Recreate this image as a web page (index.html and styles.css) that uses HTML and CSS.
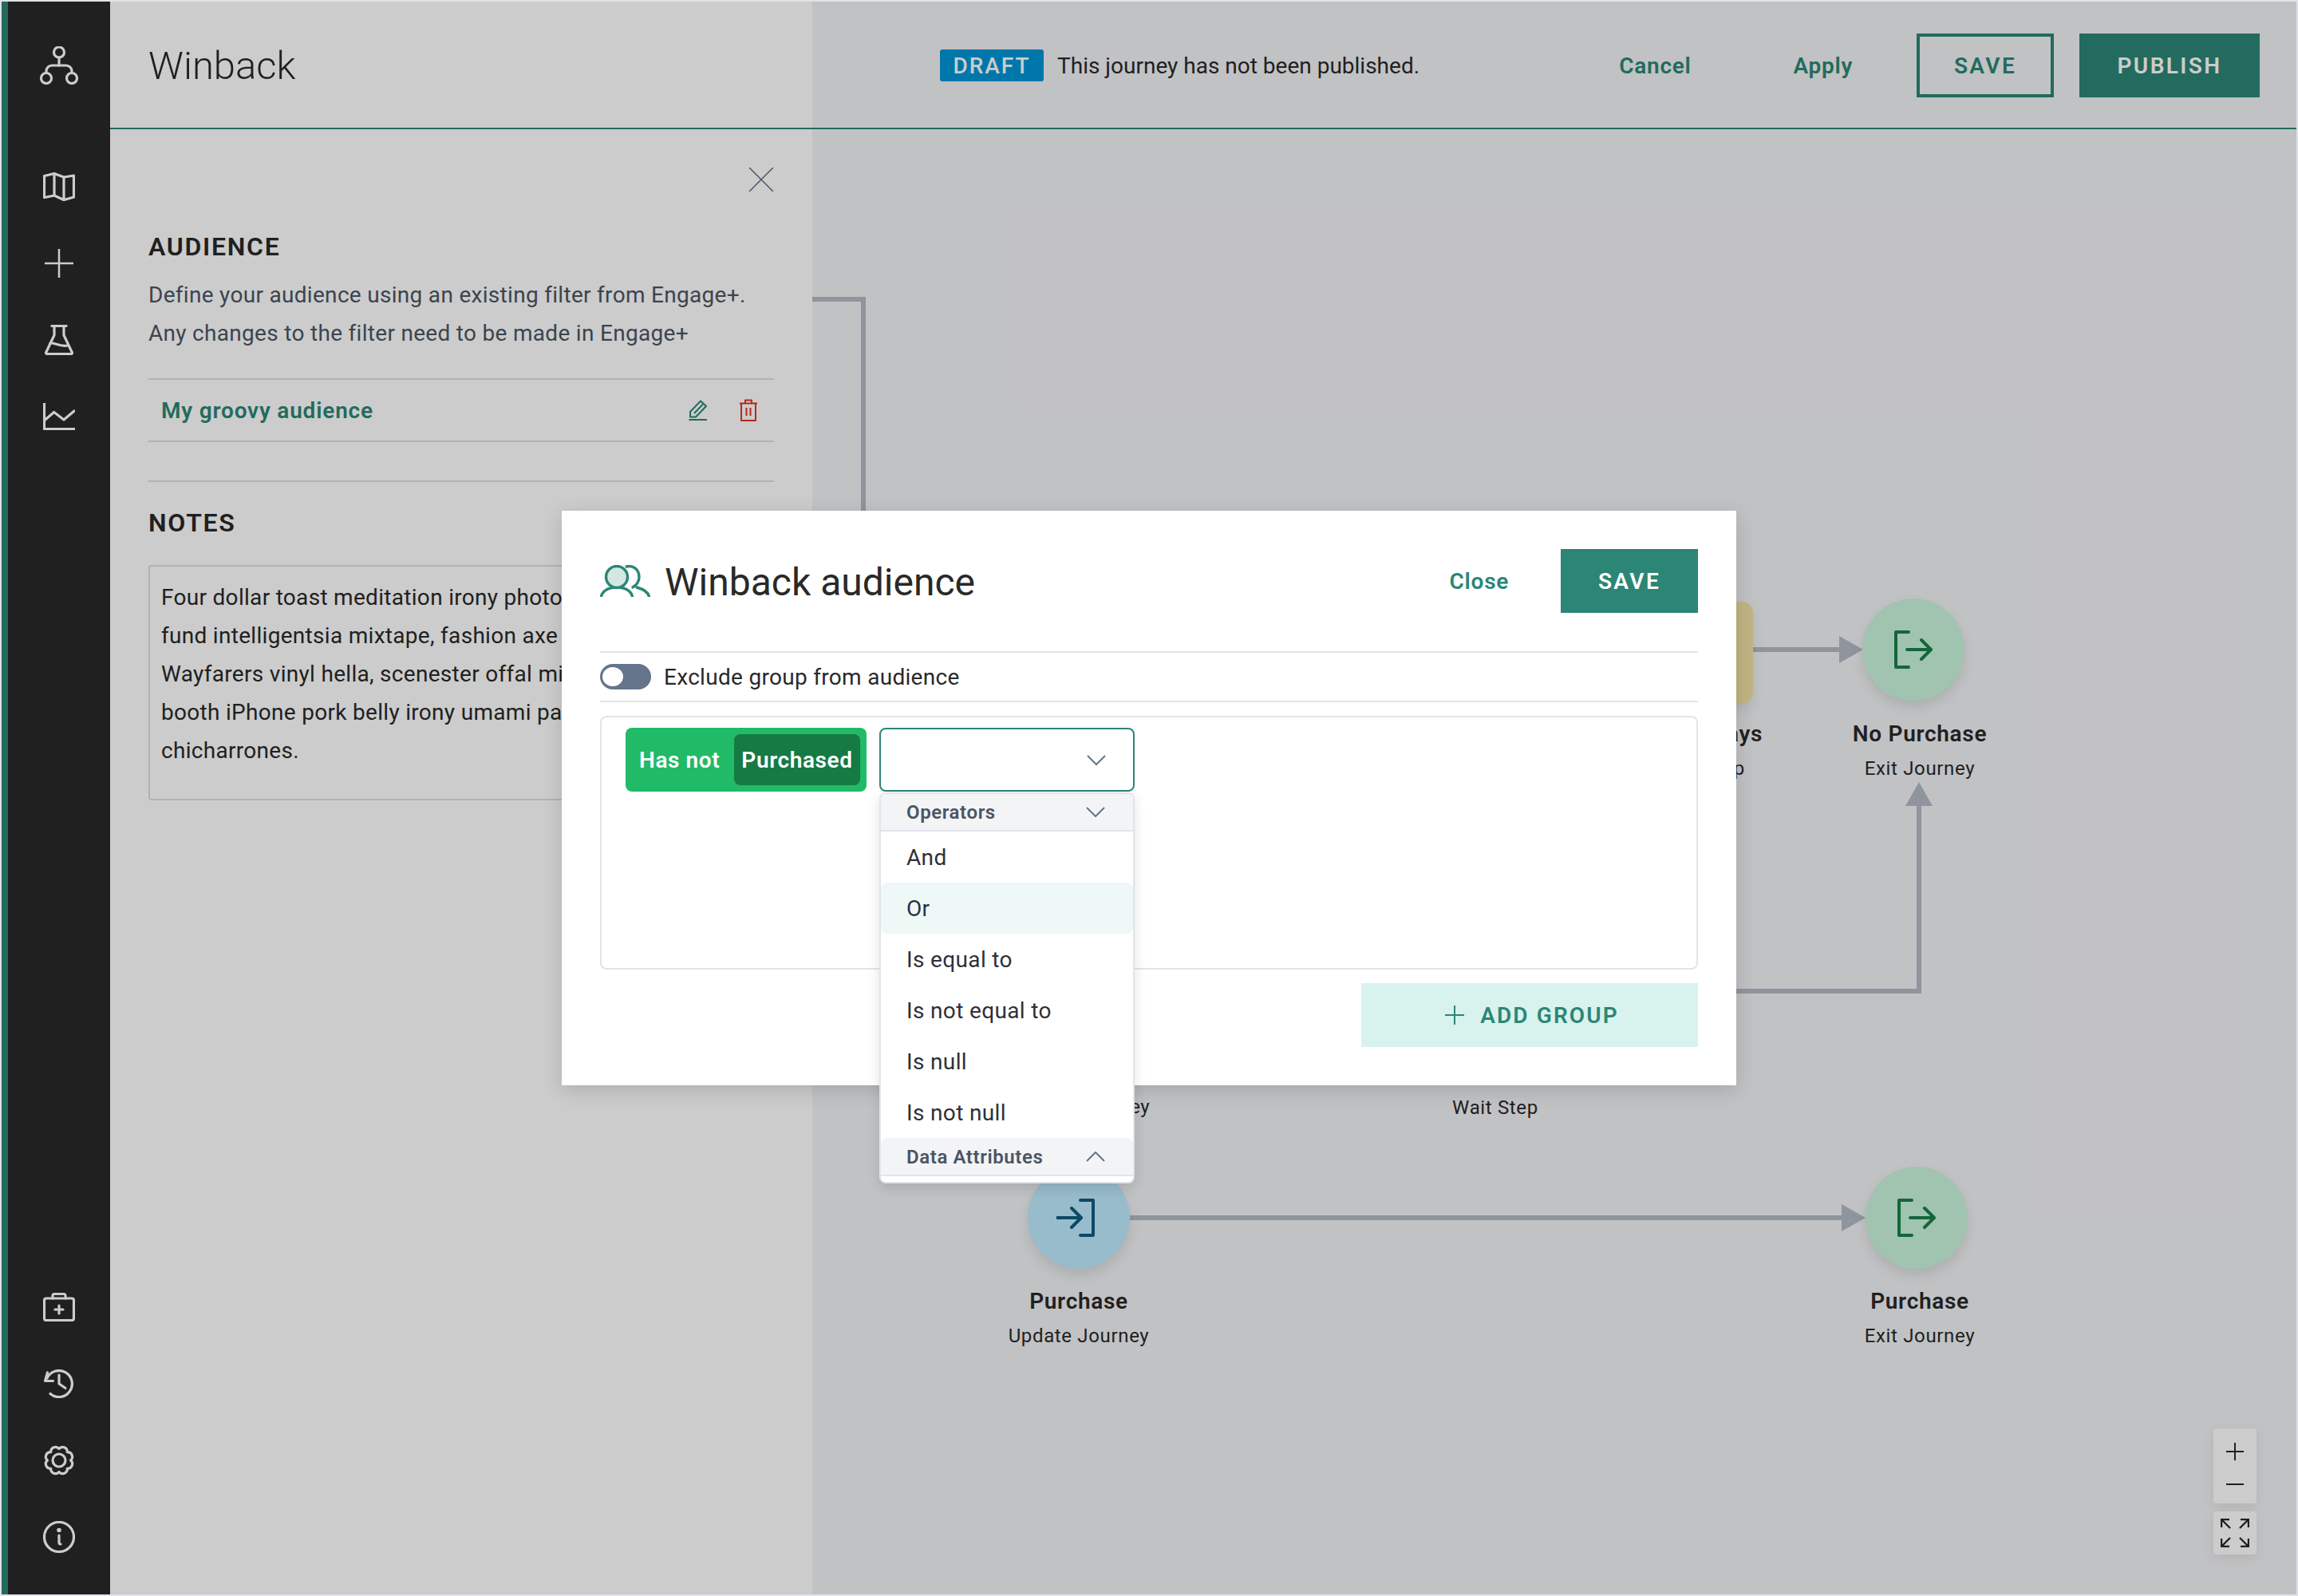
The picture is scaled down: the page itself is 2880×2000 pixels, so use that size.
FILE: index.html
```html
<!DOCTYPE html>
<html lang="en">
<head>
  <meta charset="UTF-8">
  <title>Winback</title>
  <link rel="stylesheet" href="styles.css">
</head>
<body>
<div class="app">

  <aside class="sidebar">
    <div class="logo-cell">
      <svg class="ico" width="48" height="48" viewBox="0 0 48 48"><circle cx="24" cy="7.5" r="6.5"/><path d="M24 14V24"/><path d="M8 33.5V31a7 7 0 0 1 7-7H33a7 7 0 0 1 7 7v2.5"/><circle cx="8" cy="40" r="6.5"/><circle cx="40" cy="40" r="6.5"/></svg>
    </div>
    <nav class="nav-group">
      <a class="nav-item"><svg class="ico" width="40" height="36" viewBox="0 0 40 36"><path d="M1.5 4.5L14 1.5L26 6L38.5 4V31L26 34.5L14 29L1.5 31.5Z"/><path d="M14 1.5V29M26 6V34.5"/></svg></a>
      <a class="nav-item"><svg class="ico thin" width="36" height="36" viewBox="0 0 36 36"><path d="M18 0V36M0 18H36"/></svg></a>
      <a class="nav-item"><svg class="ico" width="36" height="38" viewBox="0 0 36 38"><path d="M9 1.5H27M12 2V13L2 34a1.5 1.5 0 0 0 1.5 2.5H32.5A1.5 1.5 0 0 0 34 34L24 13V2"/><path d="M7 23C13 22 18 28 29 26"/></svg></a>
      <a class="nav-item"><svg class="ico" width="40" height="34" viewBox="0 0 40 34"><path d="M1.5 0V32.5H39.5"/><path d="M1.5 22L13.7 11.5L26 21L39 10"/></svg></a>
    </nav>
    <nav class="nav-group nav-bottom">
      <a class="nav-item"><svg class="ico" width="40" height="36" viewBox="0 0 40 36"><rect x="1.5" y="7" width="37" height="27.5" rx="2.5"/><path d="M12 7V4a2.5 2.5 0 0 1 2.5-2.5H25.5A2.5 2.5 0 0 1 28 4V7"/><path d="M20 16V26M15 21H25"/></svg></a>
      <a class="nav-item"><svg class="ico" width="38" height="36" viewBox="0 0 38 36"><path d="M4 11A16.5 16.5 0 1 1 8 30.5"/><path d="M4.5 4L1.5 14.5H11.5"/><path d="M19 7V18L27 23.5"/></svg></a>
      <a class="nav-item"><svg class="ico" width="40" height="40" viewBox="0 0 40 40"><path d="M20 5.5A5.8 5.8 0 0 1 30.25 9.75A5.8 5.8 0 0 1 34.5 20A5.8 5.8 0 0 1 30.25 30.25A5.8 5.8 0 0 1 20 34.5A5.8 5.8 0 0 1 9.75 30.25A5.8 5.8 0 0 1 5.5 20A5.8 5.8 0 0 1 9.75 9.75A5.8 5.8 0 0 1 20 5.5Z"/><circle cx="20" cy="20" r="8"/></svg></a>
      <a class="nav-item"><svg class="ico" width="40" height="40" viewBox="0 0 40 40"><circle cx="20" cy="20" r="18.5"/><circle class="dot" cx="20" cy="11.5" r="1.2"/><path d="M20 18V27a2 2 0 0 0 2 2"/></svg></a>
    </nav>
  </aside>

  <div class="main">
    <header class="topbar">
      <div class="topbar-title"><h1>Winback</h1></div>
      <div class="topbar-rest">
        <span class="draft-badge">DRAFT</span>
        <span class="draft-msg">This journey has not been published.</span>
        <div class="actions">
          <button class="btn-link">Cancel</button>
          <button class="btn-link">Apply</button>
          <button class="btn btn-outline">SAVE</button>
          <button class="btn btn-solid btn-publish">PUBLISH</button>
        </div>
      </div>
    </header>

    <div class="workspace">
      <section class="panel">
        <div class="panel-close">
          <svg class="close-x" width="32" height="30" viewBox="0 0 32 30"><path d="M1 0L31 30M31 0L1 30"/></svg>
        </div>
        <h2 class="panel-heading audience-heading">AUDIENCE</h2>
        <p class="panel-desc">Define your audience using an existing filter from Engage+.<br>Any changes to the filter need to be made in Engage+</p>
        <div class="audience-row">
          <span class="audience-name">My groovy audience</span>
          <svg class="edit-ico" width="26" height="26" viewBox="0 0 26 26"><path d="M3 21.5V15L16 1.5L23 8L10 21.5Z"/><path d="M8 17L19 5.5"/><path d="M1.5 25H24"/></svg>
          <svg class="trash-ico" width="24" height="28" viewBox="0 0 24 28"><path d="M1 5.5H23M8 5V1.5H16V5"/><path d="M3 5.5V27H21V5.5"/><path d="M9.5 11V21M14.5 11V21"/></svg>
        </div>
        <hr class="panel-rule">
        <h2 class="panel-heading notes-heading">NOTES</h2>
        <div class="notes-box">Four dollar toast meditation irony photo booth, next level<br>fund intelligentsia mixtape, fashion axe kickstarter tofu<br>Wayfarers vinyl hella, scenester offal mixtape chia<br>booth iPhone pork belly irony umami paleo tacos<br>chicharrones.</div>
      </section>

      <section class="canvas">
        <svg class="wires" width="1860" height="1836" viewBox="1018 162 1860 1836">
          <path d="M1018 375H1082V700"/>
          <path d="M2196 814H2306"/>
          <path class="head" d="M2305 797L2335 814L2305 831Z"/>
          <path d="M2100 1242H2405V1005"/>
          <path class="head" d="M2388 1010L2405 980L2422 1010Z"/>
          <path d="M1416 1526H2310"/>
          <path class="head" d="M2308 1509L2338 1526L2308 1543Z"/>
        </svg>

        <div class="wait-box"></div>

        <div class="node node-exit-a">
          <div class="node-dot dot-green shift-a">
            <svg class="exit-ico" width="48" height="48" viewBox="0 0 48 48"><path d="M18 2H2V46H18"/><path d="M16 24H46M34 12L46 24L34 36"/></svg>
          </div>
          <div class="node-title">No Purchase</div>
          <div class="node-sub">Exit Journey</div>
        </div>
        <div class="node node-wait">
          <div class="node-spacer"></div>
          <div class="node-title">Wait 7 days</div>
          <div class="node-sub">Wait Step</div>
        </div>
        <div class="node node-wait-low">
          <div class="node-spacer"></div>
          <div class="node-title">Wait 7 days</div>
          <div class="node-sub">Wait Step</div>
        </div>
        <div class="node node-update-mid">
          <div class="node-spacer"></div>
          <div class="node-title">Purchase</div>
          <div class="node-sub">Update Journey</div>
        </div>
        <div class="node node-update">
          <div class="node-dot dot-blue">
            <svg class="enter-ico" width="48" height="48" viewBox="0 0 48 48"><path d="M30 2H46V46H30"/><path d="M0 24H30M19 12L31 24L19 36"/></svg>
          </div>
          <div class="node-title">Purchase</div>
          <div class="node-sub">Update Journey</div>
        </div>
        <div class="node node-exit-b">
          <div class="node-dot dot-green shift-b">
            <svg class="exit-ico" width="48" height="48" viewBox="0 0 48 48"><path d="M18 2H2V46H18"/><path d="M16 24H46M34 12L46 24L34 36"/></svg>
          </div>
          <div class="node-title">Purchase</div>
          <div class="node-sub">Exit Journey</div>
        </div>

        <div class="zoom-controls">
          <div class="zoom-box zoom-pm">
            <svg class="zoom-ico" width="22" height="22" viewBox="0 0 22 22"><path d="M11 0V22M0 11H22"/></svg>
            <svg class="zoom-ico" width="22" height="2" viewBox="0 0 22 2"><path d="M0 1H22"/></svg>
          </div>
          <div class="zoom-box zoom-fit">
            <svg class="fit-ico" width="36" height="36" viewBox="0 0 36 36"><path d="M1 11V1H11M1 1L12 12M25 1H35V11M35 1L24 12M1 25V35H11M1 35L12 24M25 35H35V25M35 35L24 24"/></svg>
          </div>
        </div>
      </section>
    </div>
  </div>

  <div class="overlay">
    <div class="modal">
      <div class="modal-head">
        <svg class="people-ico" width="63" height="40" viewBox="0 0 63 40"><path d="M1.5 39.5C3 32 11 28 21 28C31 28 39 32 40.5 39.5"/><ellipse class="head-fill" cx="21" cy="15" rx="13.5" ry="13.5"/><path d="M33 2C42 0 49 6 49 15C49 21 46 25 41 28"/><path d="M46 28C53 30 60 33 61.5 39.5"/></svg>
        <h2 class="modal-title">Winback audience</h2>
        <button class="btn-link btn-close">Close</button>
        <button class="btn btn-modal-save">SAVE</button>
      </div>
      <div class="exclude-row">
        <span class="toggle"><span class="toggle-knob"></span></span>
        <span>Exclude group from audience</span>
      </div>
      <div class="group-box">
        <div class="rule-pill">
          <span class="rule-label">Has not</span>
          <span class="rule-value">Purchased</span>
        </div>
        <div class="select-wrap">
          <div class="select-input">
            <svg class="chev" width="24" height="13" viewBox="0 0 24 13"><path d="M1 1L12 12L23 1"/></svg>
          </div>
          <div class="select-menu">
            <div class="menu-head">
              <span>Operators</span>
              <svg class="chev" width="24" height="13" viewBox="0 0 24 13"><path d="M1 1L12 12L23 1"/></svg>
            </div>
            <div class="menu-item">And</div>
            <div class="menu-item menu-item-hover">Or</div>
            <div class="menu-item">Is equal to</div>
            <div class="menu-item">Is not equal to</div>
            <div class="menu-item">Is null</div>
            <div class="menu-item">Is not null</div>
            <div class="menu-head menu-head-data">
              <span>Data Attributes</span>
              <svg class="chev" width="24" height="13" viewBox="0 0 24 13"><path d="M1 12L12 1L23 12"/></svg>
            </div>
          </div>
        </div>
      </div>
      <div class="modal-foot">
        <button class="btn-add">
          <svg class="add-ico" width="24" height="24" viewBox="0 0 24 24"><path d="M12 0V24M0 12H24"/></svg>
          ADD GROUP
        </button>
      </div>
    </div>
  </div>

</div>
</body>
</html>
```

FILE: styles.css
```css
* { box-sizing: border-box; }
html, body { margin: 0; height: 100%; }
body { padding: 2px; background-color: #dfe2e8; font-family: Roboto, "Liberation Sans", sans-serif; color: #292929; }
button { font-family: inherit; cursor: pointer; border: none; background: none; padding: 0; }
h1, h2, p { margin: 0; }

.app { position: relative; display: flex; width: 2876px; height: 1996px; overflow: hidden; }

/* sidebar */
.sidebar { display: flex; flex-direction: column; width: 136px; flex-shrink: 0; background-color: #292929; border-left: 8px solid #2b8676; padding-bottom: 24px; }
.logo-cell { display: flex; align-items: center; justify-content: center; height: 160px; flex-shrink: 0; margin-bottom: 24px; }
.nav-group { display: flex; flex-direction: column; }
.nav-bottom { margin-top: auto; }
.nav-item { display: flex; align-items: center; justify-content: center; height: 96px; }
.ico { fill: none; stroke: #fff; stroke-width: 3.2; stroke-linecap: round; stroke-linejoin: round; }
.ico.thin { stroke-width: 2.5; }
.ico .dot { fill: #fff; }

/* top bar */
.main { display: flex; flex-direction: column; flex: 1; min-width: 0; }
.topbar { display: flex; height: 160px; flex-shrink: 0; border-bottom: 2px solid #2b8676; }
.topbar-title { display: flex; align-items: center; width: 880px; padding: 2px 0 0 48px; background-color: #fff; }
.topbar-title h1 { font-size: 49px; font-weight: 300; }
.topbar-rest { display: flex; align-items: center; flex: 1; padding: 2px 46px 0 160px; background-color: #f2f3f5; }
.draft-badge { display: flex; align-items: center; justify-content: center; width: 130px; height: 40px; border-radius: 3px; background-color: #0095d6; color: #fff; font-size: 28px; font-weight: 500; letter-spacing: 2px; }
.draft-msg { margin-left: 17px; font-size: 28px; }
.actions { display: flex; align-items: center; gap: 32px; margin-left: auto; }
.btn-link { padding: 0 48px; font-size: 28px; font-weight: 600; letter-spacing: 0.7px; color: #2b8676; }
.btn { height: 80px; width: 172px; font-size: 28px; font-weight: 600; letter-spacing: 2.4px; }
.btn-outline { border: 4px solid #2b8676; color: #2b8676; }
.btn-solid { background-color: #2b8676; color: #fff; }
.btn-publish { width: 226px; }

/* left panel */
.workspace { display: flex; flex: 1; min-height: 0; }
.panel { width: 880px; flex-shrink: 0; padding: 48px 48px 0; background-color: #fff; position: relative; z-index: 1; }
.panel-close { display: flex; justify-content: flex-end; height: 30px; }
.close-x { fill: none; stroke: #64748b; stroke-width: 1.6; }
.panel-heading { font-size: 32px; font-weight: 600; line-height: 36px; letter-spacing: 1.7px; }
.audience-heading { margin-top: 51px; }
.panel-desc { margin-top: 19px; font-size: 28px; line-height: 48px; color: #4b5563; letter-spacing: 0.3px; }
.audience-row { display: flex; align-items: center; height: 80px; margin-top: 32px; padding: 0 20px 0 16px; border-top: 2px solid #dde0e4; border-bottom: 2px solid #dde0e4; }
.audience-name { flex: 1; font-size: 28px; font-weight: 600; color: #2b8676; letter-spacing: 0.8px; }
.edit-ico { fill: none; stroke: #2b8676; stroke-width: 2; stroke-linejoin: round; margin-right: 38px; }
.trash-ico { fill: none; stroke: #e6331f; stroke-width: 2; stroke-linejoin: round; }
.panel-rule { height: 2px; margin: 48px 0 0; border: none; background-color: #dde0e4; }
.notes-heading { margin-top: 33px; }
.notes-box { height: 295px; margin-top: 35px; padding: 15px 14px; border: 2px solid #dde0e4; border-radius: 4px; font-size: 28px; line-height: 48px; white-space: nowrap; overflow: hidden; letter-spacing: 0.3px; }

/* journey canvas */
.canvas { position: relative; flex: 1; background-color: #f2f3f5; }
.wires { position: absolute; left: 0; top: 0; fill: none; stroke: #b2bbc4; stroke-width: 6; }
.wires .head { fill: #b2bbc4; stroke: none; }
.wait-box { position: absolute; left: 1049px; top: 592px; width: 130px; height: 128px; border-radius: 14px; background-color: #f2e2a6; box-shadow: 0 8px 16px rgba(0, 0, 0, 0.08); }
.node { position: absolute; display: flex; flex-direction: column; align-items: center; width: 320px; }
.node-exit-a { left: 1228px; top: 589px; }
.node-exit-b { left: 1228px; top: 1300px; }
.node-update { left: 174px; top: 1300px; }
.node-update-mid { left: 175px; top: 1013px; }
.node-wait { left: 955px; top: 589px; }
.node-wait-low { left: 696px; top: 1014px; }
.node-spacer { width: 128px; height: 128px; }
.node-dot { display: flex; align-items: center; justify-content: center; width: 128px; height: 128px; border-radius: 50%; box-shadow: 0 8px 16px rgba(0, 0, 0, 0.1); }
.dot-green { background-color: #c9f5dd; }
.dot-blue { background-color: #beebff; }
.shift-a { margin-right: 16px; margin-top: -1px; margin-bottom: 1px; }
.shift-b { margin-right: 8px; }
.node-title { margin-top: 23px; font-size: 28px; line-height: 36px; font-weight: 600; letter-spacing: 0.7px; }
.node-sub { margin-top: 7px; font-size: 24px; line-height: 36px; letter-spacing: 0.65px; }
.exit-ico { fill: none; stroke: #198049; stroke-width: 4; stroke-linecap: round; stroke-linejoin: round; }
.enter-ico { fill: none; stroke: #105c80; stroke-width: 4; stroke-linecap: round; stroke-linejoin: round; margin-right: 8px; }
.zoom-controls { position: absolute; right: 50px; bottom: 50px; display: flex; flex-direction: column; gap: 10px; }
.zoom-box { display: flex; flex-direction: column; align-items: center; justify-content: center; width: 54px; border-radius: 4px; background-color: #fff; box-shadow: 0 4px 16px rgba(0, 0, 0, 0.08); }
.zoom-pm { justify-content: flex-start; height: 94px; padding-top: 18px; gap: 29px; }
.zoom-fit { height: 54px; }
.zoom-ico { fill: none; stroke: #292929; stroke-width: 2; }
.fit-ico { fill: none; stroke: #292929; stroke-width: 2.4; }

/* modal */
.overlay { position: absolute; inset: 0; z-index: 10; display: flex; align-items: center; justify-content: center; background-color: rgba(0, 0, 0, 0.2); }
.modal { width: 1472px; height: 720px; padding: 48px; background-color: #fff; box-shadow: 0 6px 24px rgba(0, 0, 0, 0.15); }
.modal-head { display: flex; align-items: center; height: 80px; }
.people-ico { fill: none; stroke: #2b8676; stroke-width: 3.4; stroke-linecap: round; }
.head-fill { fill: #d5e7e3; }
.modal-title { flex: 1; margin: 2px 0 0 18px; font-size: 48px; font-weight: 400; }
.btn-close { padding: 0 65px 0 0; }
.btn-modal-save { background-color: #2b8676; color: #fff; }
.exclude-row { display: flex; align-items: center; gap: 16px; height: 64px; margin-top: 48px; border-top: 2px solid #e2e4ea; border-bottom: 2px solid #e2e4ea; font-size: 28px; letter-spacing: 0.3px; }
.toggle { display: flex; align-items: center; width: 64px; height: 32px; padding-left: 3px; border-radius: 16px; background-color: #64748b; }
.toggle-knob { width: 26px; height: 24px; border-radius: 50%; background-color: #fff; }
.group-box { display: flex; align-items: flex-start; gap: 16px; height: 318px; margin-top: 17px; padding: 13px 30px; border: 2px solid #e2e4ea; border-radius: 8px; }
.rule-pill { display: flex; align-items: center; width: 302px; height: 80px; padding: 0 8px 0 17px; border-radius: 8px; background-color: #21ba67; color: #fff; font-size: 28px; font-weight: 600; letter-spacing: 0.6px; }
.rule-label { flex: 1; }
.rule-value { display: flex; align-items: center; justify-content: center; width: 158px; height: 64px; border-radius: 8px; background-color: #157a43; }
.select-wrap { position: relative; width: 320px; }
.select-input { display: flex; align-items: center; justify-content: flex-end; height: 80px; padding-right: 34px; border: 2px solid #2b8676; border-radius: 8px; }
.chev { fill: none; stroke: #64748b; stroke-width: 2; }
.select-menu { position: absolute; left: 0; right: 0; top: 81px; height: 490px; overflow: hidden; background-color: #fff; border: 2px solid #e2e4ea; border-radius: 8px; box-shadow: 0 6px 16px rgba(0, 0, 0, 0.12); z-index: 5; }
.menu-head { display: flex; align-items: center; justify-content: space-between; height: 47px; padding: 0 35px 0 32px; background-color: #f3f4f6; border-bottom: 2px solid #e2e4ea; font-size: 24px; font-weight: 600; color: #4b5563; letter-spacing: 0.6px; }
.menu-head-data { height: 48px; padding-top: 1px; border-radius: 8px 8px 0 0; }
.menu-item { display: flex; align-items: center; height: 64px; padding-left: 32px; font-size: 28px; letter-spacing: 0.35px; color: #2d3139; }
.menu-item-hover { background-color: #eef8f6; border-radius: 8px; }
.modal-foot { display: flex; justify-content: flex-end; margin-top: 17px; }
.btn-add { display: flex; align-items: center; justify-content: center; gap: 20px; width: 422px; height: 80px; padding-left: 6px; background-color: #d8f2ed; color: #2b8676; font-size: 28px; font-weight: 600; letter-spacing: 2.1px; }
.add-ico { fill: none; stroke: #2b8676; stroke-width: 2; }
```
